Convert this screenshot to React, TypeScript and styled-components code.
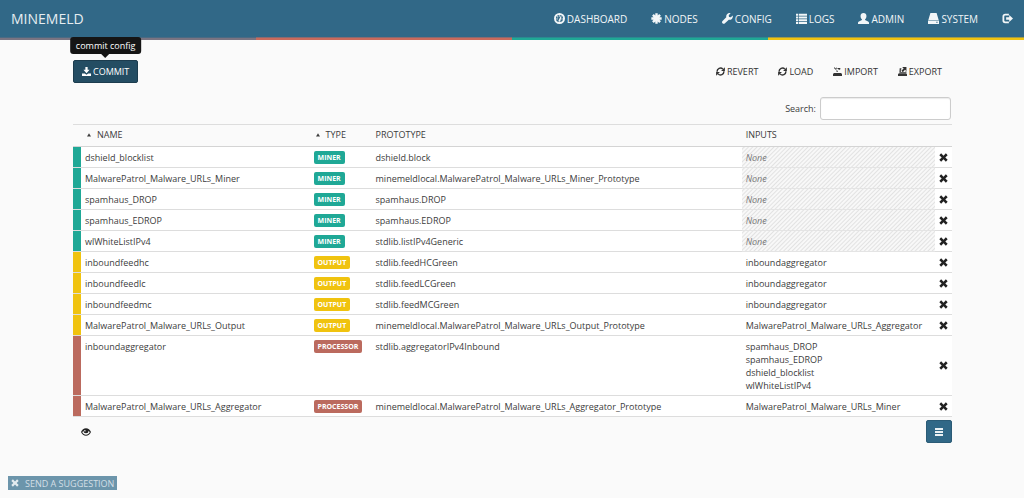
import React from "react";
import styled, { createGlobalStyle, css } from "styled-components";

const GlobalStyle = createGlobalStyle`
  *, *::before, *::after { box-sizing: border-box; }
  body {
    margin: 0;
    background: #fafafa;
    color: #3c3c3c;
    font-family: "Open Sans", sans-serif;
    font-size: 9px;
    line-height: 13px;
  }
  button, input { font: inherit; color: inherit; }
`;

const ICONS = {
  dashboard: (
    <>
      <circle cx="8" cy="8" r="6.6" fill="none" stroke="currentColor" strokeWidth="2.8" />
      <path d="M6.600 10.800 9.800 4.400l1.200.6-1.700 6.300a1.400 1.400 0 1 1-2.700-.5z" />
      <circle cx="4.400" cy="8.600" r="1" />
      <circle cx="5.300" cy="5.600" r="1" />
      <circle cx="8" cy="4.300" r=".9" />
      <circle cx="11.700" cy="8.600" r="1" />
    </>
  ),
  asterisk: (
    <path
      d="M8 .5v15M.5 8h15M2.800 2.800l10.400 10.400M13.200 2.800 2.800 13.200"
      fill="none"
      stroke="currentColor"
      strokeWidth="3.500"
    />
  ),
  wrench: (
    <path d="M15.600 3.600 12.800 6.200 10.200 5.700 9.800 3.200 12.500.4C10.600-.2 8.600.4 7.300 1.800 6.200 3 5.900 4.500 6.200 6L.8 11.500c-1 1-1 2.600 0 3.500.9 1 2.500 1 3.500 0L9.900 9.700c1.500.4 3.200.1 4.400-1.100 1.400-1.300 1.800-3.300 1.300-5z" />
  ),
  list: (
    <path d="M0 1h3v3H0zM4 1h12v3H4zM0 5h3v3H0zM4 5h12v3H4zM0 9h3v3H0zM4 9h12v3H4zM0 13h3v3H0zM4 13h12v3H4z" />
  ),
  user: (
    <path d="M8 0c2.600 0 4.300 1.600 4.300 4.200 0 1.900-.8 3.800-2 4.800v1.200l4.300 2c.9.4 1.400 1 1.400 1.900V16H0v-1.900c0-.9.5-1.500 1.400-1.900l4.300-2V9c-1.200-1-2-2.900-2-4.800C3.700 1.600 5.400 0 8 0z" />
  ),
  hdd: <path d="M3.500 0h9L15.500 10H.5zM0 11h16v5H0zM12 12.800v1.400h2v-1.400z" fillRule="evenodd" />,
  logout: (
    <>
      <path
        d="M10 2.500H4.500A2.500 2.500 0 0 0 2 5v6a2.500 2.500 0 0 0 2.500 2.500H10"
        fill="none"
        stroke="currentColor"
        strokeWidth="2.600"
      />
      <path d="M6 6.300h4.500V3L16 8l-5.500 5V9.700H6z" />
    </>
  ),
  save: <path d="M6 0h4v5h3.500L8 11 2.500 5H6zM0 11.500h5l3 2.300 3-2.300h5V16H0z" />,
  refresh: (
    <>
      <path
        d="M2 8.500a6 6 0 0 1 10.300-4.700M14 7.500a6 6 0 0 1-10.300 4.700"
        fill="none"
        stroke="currentColor"
        strokeWidth="2.500"
      />
      <path d="M15.800.5v6.800H9zM.2 15.500V8.700H7z" />
    </>
  ),
  importing: (
    <path d="M2 0l3.500 3.500L7.500 1.800H13V9H5.500l1.800-2L2 2zM7.500 9H13V3.500L11 5.500 6 .8 4 2.800l4.900 4.900zM1.500 10.800h13L16 13v3H0v-3z" />
  ),
  exporting: (
    <path d="M7.500 0H15v7.500l-2.500-2.400-4 4.100L6 6.700l4-4.200zM3 2h3v2.300H5v4.500h8V8h2v2.200H2.500zM1.500 11h13L16 13v3H0v-3z" />
  ),
  remove: (
    <path d="M3.800.6 8 4.800 12.200.6l3.200 3.200L11.200 8l4.200 4.200-3.200 3.200L8 11.200l-4.200 4.200-3.200-3.200L4.800 8 .6 3.800z" />
  ),
  eye: (
    <path
      fillRule="evenodd"
      d="M8 2c3.500 0 6.500 2.500 8 6-1.500 3.500-4.500 6-8 6s-6.500-2.500-8-6c1.500-3.500 4.500-6 8-6zM2 8.500C3.300 10.800 5.400 12.300 8 12.300s4.700-1.500 6-3.800c-.5-1.200-1.200-2-2-2.700a4 4 0 1 1-8 0c-.8.700-1.500 1.500-2 2.700zM6.300 4.600a1.300 1.300 0 1 0 1.300 1.300z"
    />
  ),
  menu: <path d="M0 0h16v4H0zM0 6h16v4H0zM0 12h16v4H0z" opacity=".9" />,
  sort: <path d="M8 1l8 13H0z" />,
};

type IconName = keyof typeof ICONS;

const Svg = styled.svg<{ $size: number }>`
  display: block;
  flex: none;
  width: ${(p) => p.$size}px;
  height: ${(p) => p.$size}px;
  fill: currentColor;
`;

const Icon = ({ name, size = 10 }: { name: IconName; size?: number }) => (
  <Svg viewBox="0 0 16 16" $size={size} aria-hidden="true">
    {ICONS[name]}
  </Svg>
);

const Header = styled.header`
  display: flex;
  align-items: center;
  justify-content: space-between;
  height: 37px;
  padding: 0 11px;
  background: #316887;
  color: #fff;
`;

const Brand = styled.a`
  color: #e6edf1;
  font-size: 14px;
  line-height: 20px;
  text-decoration: none;
`;

const Nav = styled.nav`
  display: flex;
  gap: 24px;
`;

const NavLink = styled.a`
  display: flex;
  align-items: center;
  gap: 2px;
  color: #f2f6f8;
  font-size: 10px;
  line-height: 20px;
  text-decoration: none;
`;

const Stripes = styled.div`
  display: grid;
  grid-template-columns: repeat(4, 1fr);
  height: 3px;
`;

const Stripe = styled.span<{ $color: string; $edge: string }>`
  border-top: 1px solid ${(p) => p.$edge};
  background: ${(p) => p.$color};
`;

const Main = styled.main`
  max-width: 880px;
  margin: 0 auto;
  padding: 20px 0 0 1px;
`;

const Toolbar = styled.div`
  display: flex;
  align-items: center;
  justify-content: space-between;
`;

const ToolGroup = styled.div`
  display: flex;
`;

const CommitWrap = styled.div`
  position: relative;
`;

const buttonBase = css`
  display: flex;
  align-items: center;
  justify-content: center;
  gap: 2px;
  height: 23px;
  border-radius: 2px;
  cursor: pointer;
`;

const PrimaryButton = styled.button<{ $active?: boolean }>`
  ${buttonBase}
  padding: 0 8px;
  border: 1px solid ${(p) => (p.$active ? "#1c3c4e" : "#2b5b76")};
  background: ${(p) => (p.$active ? "#244d63" : "#316887")};
  color: #fff;
`;

const PlainButton = styled.button`
  ${buttonBase}
  padding: 0 10px;
  border: 0;
  background: transparent;
  color: #333;
`;

const Tooltip = styled.div`
  position: absolute;
  bottom: 100%;
  left: 50%;
  margin-bottom: 6px;
  padding: 2px 6px;
  transform: translateX(-50%);
  border-radius: 3px;
  background: #151515;
  color: #fff;
  white-space: nowrap;

  &::after {
    content: "";
    position: absolute;
    top: 100%;
    left: 50%;
    margin-left: -4px;
    border: 4px solid transparent;
    border-top-color: #151515;
    border-bottom: 0;
  }
`;

const SearchRow = styled.div`
  display: flex;
  justify-content: flex-end;
  padding: 14px 1px 4px;
`;

const SearchLabel = styled.label`
  display: flex;
  align-items: center;
  gap: 4px;
`;

const SearchInput = styled.input`
  width: 131px;
  height: 23px;
  padding: 0 6px;
  border: 1px solid #ccc;
  border-radius: 3px;
  background: #fff;
  box-shadow: inset 0 1px 1px rgba(0, 0, 0, 0.08);
`;

const Table = styled.table`
  width: 100%;
  table-layout: fixed;
  border-collapse: separate;
  border-spacing: 0;
`;

const Col = styled.col<{ $width?: string }>`
  width: ${(p) => p.$width ?? "auto"};
`;

const Th = styled.th`
  height: 23px;
  padding: 0 4px 2px;
  border-top: 1px solid #ddd;
  border-bottom: 1px solid #d4d4d4;
  font-weight: 400;
  text-align: left;
`;

const SortLabel = styled.span`
  display: flex;
  align-items: center;
  gap: 6px;
  padding-left: 2px;
`;

const Row = styled.tr`
  background: #fff;
`;

const Td = styled.td`
  padding: 4px 4px 3px;
  border-bottom: 1px solid #ddd;
  vertical-align: top;
`;

const StripeCell = styled(Td)<{ $color: string }>`
  padding: 0;
  background: ${(p) => p.$color};
`;

const EmptyCell = styled(Td)`
  background: repeating-linear-gradient(-45deg, #f8f8f8 0 1px, #e2e2e2 2px, #f8f8f8 3px);
  border-bottom-color: #e4e4e4;
  color: #777;
  font-style: italic;
`;

const ActionCell = styled(Td)`
  padding: 0 4px;
  vertical-align: middle;
`;

const IconButton = styled.button`
  display: flex;
  padding: 0;
  border: 0;
  background: transparent;
  color: #222;
  cursor: pointer;
`;

const Badge = styled.span<{ $color: string }>`
  display: block;
  width: fit-content;
  padding: 0 4px;
  border-radius: 2px;
  background: ${(p) => p.$color};
  color: #fff;
  font-size: 7px;
  font-weight: 700;
`;

const Footer = styled.div`
  display: flex;
  align-items: center;
  justify-content: space-between;
  padding: 3px 0 0 8px;
`;

const Suggestion = styled.div`
  position: fixed;
  bottom: 8px;
  left: 8px;
  display: flex;
  align-items: center;
  gap: 6px;
  height: 14px;
  padding: 0 3px;
  background: #6c95ab;
  color: #d3dfe6;

  button { color: #e4ecf0; }
  a { color: inherit; text-decoration: none; }
`;

const COLORS = { MINER: "#1fa896", OUTPUT: "#f0c30f", PROCESSOR: "#bb6a5e" };

type NodeType = keyof typeof COLORS;

const NODES: { name: string; type: NodeType; prototype: string; inputs: string[] }[] = [
  { name: "dshield_blocklist", type: "MINER", prototype: "dshield.block", inputs: [] },
  { name: "MalwarePatrol_Malware_URLs_Miner", type: "MINER", prototype: "minemeldlocal.MalwarePatrol_Malware_URLs_Miner_Prototype", inputs: [] },
  { name: "spamhaus_DROP", type: "MINER", prototype: "spamhaus.DROP", inputs: [] },
  { name: "spamhaus_EDROP", type: "MINER", prototype: "spamhaus.EDROP", inputs: [] },
  { name: "wlWhiteListIPv4", type: "MINER", prototype: "stdlib.listIPv4Generic", inputs: [] },
  { name: "inboundfeedhc", type: "OUTPUT", prototype: "stdlib.feedHCGreen", inputs: ["inboundaggregator"] },
  { name: "inboundfeedlc", type: "OUTPUT", prototype: "stdlib.feedLCGreen", inputs: ["inboundaggregator"] },
  { name: "inboundfeedmc", type: "OUTPUT", prototype: "stdlib.feedMCGreen", inputs: ["inboundaggregator"] },
  { name: "MalwarePatrol_Malware_URLs_Output", type: "OUTPUT", prototype: "minemeldlocal.MalwarePatrol_Malware_URLs_Output_Prototype", inputs: ["MalwarePatrol_Malware_URLs_Aggregator"] },
  { name: "inboundaggregator", type: "PROCESSOR", prototype: "stdlib.aggregatorIPv4Inbound", inputs: ["spamhaus_DROP", "spamhaus_EDROP", "dshield_blocklist", "wlWhiteListIPv4"] },
  { name: "MalwarePatrol_Malware_URLs_Aggregator", type: "PROCESSOR", prototype: "minemeldlocal.MalwarePatrol_Malware_URLs_Aggregator_Prototype", inputs: ["MalwarePatrol_Malware_URLs_Miner"] },
];

const NAV: { icon: IconName; label: string }[] = [
  { icon: "dashboard", label: "DASHBOARD" },
  { icon: "asterisk", label: "NODES" },
  { icon: "wrench", label: "CONFIG" },
  { icon: "list", label: "LOGS" },
  { icon: "user", label: "ADMIN" },
  { icon: "hdd", label: "SYSTEM" },
  { icon: "logout", label: "" },
];

const TOOLS: { icon: IconName; label: string }[] = [
  { icon: "refresh", label: "REVERT" },
  { icon: "refresh", label: "LOAD" },
  { icon: "importing", label: "IMPORT" },
  { icon: "exporting", label: "EXPORT" },
];

export default function App() {
  return (
    <>
      <GlobalStyle />
      <Header>
        <Brand href="#">MINEMELD</Brand>
        <Nav>
          {NAV.map(({ icon, label }) => (
            <NavLink key={icon} href="#" aria-label={label || "Log out"}>
              <Icon name={icon} size={11} />
              {label}
            </NavLink>
          ))}
        </Nav>
      </Header>
      <Stripes>
        <Stripe $color="#7a7482" $edge="#4b6a83" />
        <Stripe $color="#c96a5c" $edge="#8a6a70" />
        <Stripe $color="#1fa896" $edge="#2a8a90" />
        <Stripe $color="#f0c30f" $edge="#a09a48" />
      </Stripes>
      <Main>
        <Toolbar>
          <CommitWrap>
            <PrimaryButton $active aria-describedby="commit-tip">
              <Icon name="save" size={9} />
              COMMIT
            </PrimaryButton>
            <Tooltip id="commit-tip" role="tooltip">commit config</Tooltip>
          </CommitWrap>
          <ToolGroup>
            {TOOLS.map(({ icon, label }) => (
              <PlainButton key={label}>
                <Icon name={icon} size={9} />
                {label}
              </PlainButton>
            ))}
          </ToolGroup>
        </Toolbar>
        <SearchRow>
          <SearchLabel>
            Search:
            <SearchInput type="search" />
          </SearchLabel>
        </SearchRow>
        <Table>
          <colgroup>
            <Col $width="8px" />
            <Col $width="26%" />
            <Col $width="62px" />
            <Col />
            <Col $width="22%" />
            <Col $width="17px" />
          </colgroup>
          <thead>
            <tr>
              <Th />
              <Th><SortLabel><Icon name="sort" size={4} />NAME</SortLabel></Th>
              <Th><SortLabel><Icon name="sort" size={4} />TYPE</SortLabel></Th>
              <Th>PROTOTYPE</Th>
              <Th>INPUTS</Th>
              <Th />
            </tr>
          </thead>
          <tbody>
            {NODES.map((node) => (
              <Row key={node.name}>
                <StripeCell $color={COLORS[node.type]} />
                <Td>{node.name}</Td>
                <Td><Badge $color={COLORS[node.type]}>{node.type}</Badge></Td>
                <Td>{node.prototype}</Td>
                {node.inputs.length === 0 ? (
                  <EmptyCell>None</EmptyCell>
                ) : (
                  <Td>{node.inputs.map((input) => <div key={input}>{input}</div>)}</Td>
                )}
                <ActionCell>
                  <IconButton aria-label={`Remove ${node.name}`}><Icon name="remove" size={9} /></IconButton>
                </ActionCell>
              </Row>
            ))}
          </tbody>
        </Table>
        <Footer>
          <IconButton aria-label="Show configuration"><Icon name="eye" size={10} /></IconButton>
          <PrimaryButton aria-label="Menu"><Icon name="menu" size={8} /></PrimaryButton>
        </Footer>
      </Main>
      <Suggestion>
        <IconButton aria-label="Dismiss"><Icon name="remove" size={8} /></IconButton>
        <a href="#">SEND A SUGGESTION</a>
      </Suggestion>
    </>
  );
}
